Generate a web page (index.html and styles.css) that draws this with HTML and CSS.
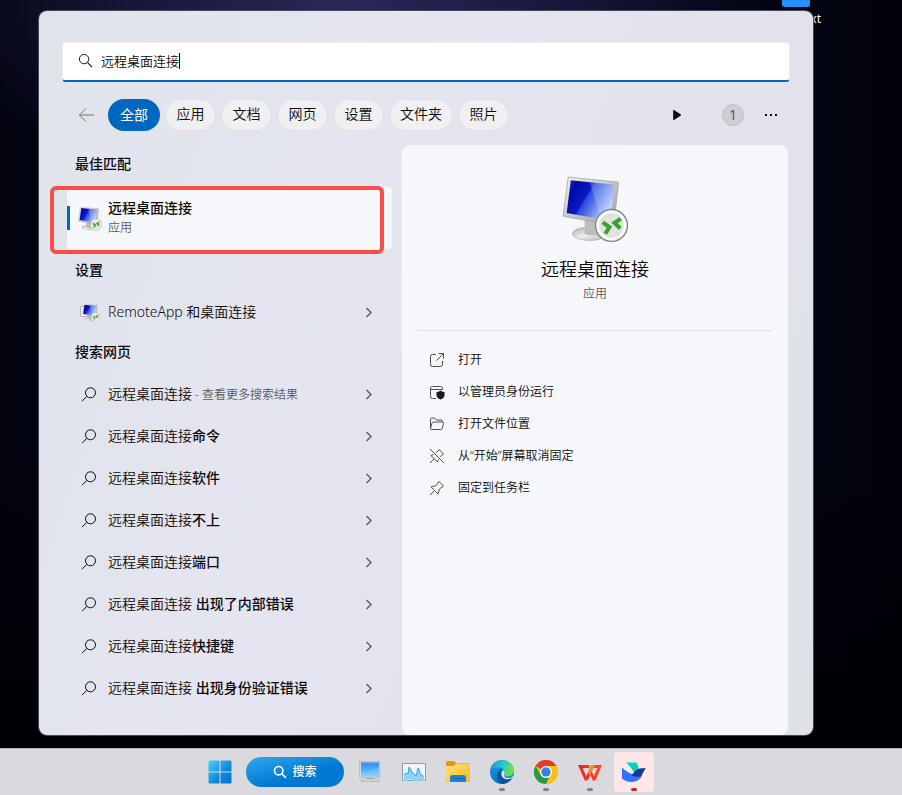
FILE: index.html
```html
<!DOCTYPE html>
<html lang="zh-CN">
<head>
<meta charset="utf-8">
<meta name="viewport" content="width=device-width, initial-scale=1">
<title>搜索</title>
<link rel="stylesheet" href="styles.css">
</head>
<body>
<svg class="defs" aria-hidden="true">
  <defs>
    <linearGradient id="screen" x1="0" y1="0" x2="1" y2="0.5">
      <stop offset="0" stop-color="#2338c8"/><stop offset=".2" stop-color="#0508a8"/><stop offset=".48" stop-color="#0a1cc4"/><stop offset=".5" stop-color="#2444dc"/><stop offset="1" stop-color="#c4d6ff"/>
    </linearGradient>
    <linearGradient id="frame" x1="0" y1="0" x2="1" y2="1">
      <stop offset="0" stop-color="#f2f2f0"/><stop offset=".5" stop-color="#c6c6c4"/><stop offset="1" stop-color="#9a9a98"/>
    </linearGradient>
    <linearGradient id="stand" x1="0" y1="0" x2="1" y2="1">
      <stop offset="0" stop-color="#a8a8a8"/><stop offset=".5" stop-color="#eeeeee"/><stop offset="1" stop-color="#b0b0b0"/>
    </linearGradient>
    <linearGradient id="tile" gradientUnits="userSpaceOnUse" x1="0" y1="0" x2="24" y2="24">
      <stop offset="0" stop-color="#4fd0fb"/><stop offset=".6" stop-color="#0f86dc"/><stop offset="1" stop-color="#0078d4"/>
    </linearGradient>
    <linearGradient id="pcblue" x1="0" y1="0" x2="0" y2="1">
      <stop offset="0" stop-color="#2f8cf0"/><stop offset="1" stop-color="#7cc8ff"/>
    </linearGradient>
    <linearGradient id="folder" x1="0" y1="0" x2="1" y2="1">
      <stop offset="0" stop-color="#ffe07a"/><stop offset="1" stop-color="#fbb922"/>
    </linearGradient>
    <linearGradient id="edgeTop" x1="0" y1="0" x2="1" y2="0.3">
      <stop offset="0" stop-color="#1693dc"/><stop offset=".5" stop-color="#2cbfd0"/><stop offset="1" stop-color="#68e052"/>
    </linearGradient>
    <linearGradient id="edgeSide" x1="0" y1="0" x2="0" y2="1">
      <stop offset="0" stop-color="#1fa0e6"/><stop offset="1" stop-color="#0870c8"/>
    </linearGradient>
    <linearGradient id="wps" gradientUnits="userSpaceOnUse" x1="0" y1="0" x2="24" y2="0">
      <stop offset="0" stop-color="#f41e1e"/><stop offset="1" stop-color="#ff4a24"/>
    </linearGradient>
    <symbol id="rdp" viewBox="0 0 64 66">
      <ellipse cx="27" cy="57" rx="17" ry="6.500" fill="url(#stand)" stroke="#aaaaaa" stroke-width=".7"/>
      <path d="M22 43h14l1 14q-8 3-15 0z" fill="#bdbdbd"/>
      <path d="M6 2 L55 7 L50 49 L1 40 Z" fill="url(#frame)" stroke="#a8a8a6" stroke-width=".8"/>
      <path d="M8.500 5 L51 9.500 L47 44.500 L4.500 37 Z" fill="url(#screen)"/>
      <path d="M27 7 L51 9.500 L47 44.500 L38 43 Z" fill="#b9cdfb" opacity=".3"/>
      <circle cx="48" cy="49" r="15.500" fill="#f5f5f3" stroke="#848482" stroke-width="1.300"/>
      <circle cx="48" cy="49" r="12.800" fill="#e2e2e0" stroke="#fff" stroke-width="1.500"/>
      <path d="M39.500 46l6.500 4.500-4 6.500M57 42.500l-6 4 5.500 5.500" fill="none" stroke="#35a52a" stroke-width="4"/>
    </symbol>
    <symbol id="find" viewBox="0 0 18 16">
      <circle cx="10.500" cy="6.800" r="5" fill="none" stroke="currentColor"/>
      <path d="M6.800 10.400 2 15.200" fill="none" stroke="currentColor"/>
    </symbol>
    <symbol id="chev" viewBox="0 0 10 12">
      <path d="M2.500 2 7 6.500 2.500 11" fill="none" stroke="currentColor" stroke-width="1.500"/>
    </symbol>
  </defs>
</svg>

<main class="desktop">
  <div class="shortcut">
    <span class="shortcut-icon"></span>
    <span class="shortcut-label">txt</span>
  </div>

  <section class="panel">
    <label class="searchbox">
      <svg class="search-icon" viewBox="0 0 16 16"><circle cx="6.500" cy="6.500" r="5" fill="none" stroke="currentColor"/><path d="M10.200 10.200 15 15" stroke="currentColor" stroke-width="1.200"/></svg>
      <input class="search-input" type="text" value="远程桌面连接" aria-label="搜索">
      <span class="caret"></span>
    </label>

    <nav class="filters">
      <button class="back" type="button" aria-label="返回"><svg viewBox="0 0 18 16"><path d="M17 8H1.500M8.500 1 1.500 8l7 7" fill="none" stroke="currentColor"/></svg></button>
      <button class="chip active" type="button">全部</button>
      <button class="chip" type="button">应用</button>
      <button class="chip" type="button">文档</button>
      <button class="chip" type="button">网页</button>
      <button class="chip" type="button">设置</button>
      <button class="chip" type="button">文件夹</button>
      <button class="chip" type="button">照片</button>
      <div class="tools">
        <button class="tool play" type="button" aria-label="更多筛选"><svg viewBox="0 0 10 12"><path d="M1.200 1.500v9q0 .8.800.4L8.600 6.700q.8-.7 0-1.400L2 1.100q-.8-.4-.8.400z" fill="currentColor"/></svg></button>
        <button class="tool points" type="button">1</button>
        <button class="tool more" type="button" aria-label="选项"><svg viewBox="0 0 14 4"><path d="M1 1h2v2H1zM6 1h2v2H6zM11 1h2v2h-2z" fill="currentColor"/></svg></button>
      </div>
    </nav>

    <div class="content">
      <div class="results">
        <h2>最佳匹配</h2>
        <div class="best-wrap">
          <button class="best" type="button">
            <svg class="app-icon"><use href="#rdp"/></svg>
            <span class="best-text"><strong>远程桌面连接</strong><small>应用</small></span>
          </button>
          <span class="marker"></span>
        </div>
        <h2>设置</h2>
        <button class="row" type="button"><svg class="remote-icon" viewBox="0 0 20 20"><path d="M.5 4.500h8v10h-8z" fill="#f4f4f4" stroke="#b4b4b8"/><use href="#rdp" x="2" y="1" width="18" height="19"/></svg><span>RemoteApp 和桌面连接</span><svg class="chev"><use href="#chev"/></svg></button>
        <h2>搜索网页</h2>
        <button class="row" type="button"><svg class="find"><use href="#find"/></svg><span>远程桌面连接<small> - 查看更多搜索结果</small></span><svg class="chev"><use href="#chev"/></svg></button>
        <button class="row" type="button"><svg class="find"><use href="#find"/></svg><span>远程桌面连接<b>命令</b></span><svg class="chev"><use href="#chev"/></svg></button>
        <button class="row" type="button"><svg class="find"><use href="#find"/></svg><span>远程桌面连接<b>软件</b></span><svg class="chev"><use href="#chev"/></svg></button>
        <button class="row" type="button"><svg class="find"><use href="#find"/></svg><span>远程桌面连接<b>不上</b></span><svg class="chev"><use href="#chev"/></svg></button>
        <button class="row" type="button"><svg class="find"><use href="#find"/></svg><span>远程桌面连接<b>端口</b></span><svg class="chev"><use href="#chev"/></svg></button>
        <button class="row" type="button"><svg class="find"><use href="#find"/></svg><span>远程桌面连接 <b>出现了内部错误</b></span><svg class="chev"><use href="#chev"/></svg></button>
        <button class="row" type="button"><svg class="find"><use href="#find"/></svg><span>远程桌面连接<b>快捷键</b></span><svg class="chev"><use href="#chev"/></svg></button>
        <button class="row" type="button"><svg class="find"><use href="#find"/></svg><span>远程桌面连接 <b>出现身份验证错误</b></span><svg class="chev"><use href="#chev"/></svg></button>
      </div>

      <aside class="preview">
        <header class="preview-head">
          <svg class="hero"><use href="#rdp"/></svg>
          <h1>远程桌面连接</h1>
          <p>应用</p>
        </header>
        <div class="actions">
          <button class="action" type="button"><svg viewBox="0 0 16 16"><path d="M7 2.500H3.500a2 2 0 0 0-2 2v8a2 2 0 0 0 2 2h8a2 2 0 0 0 2-2V9M9.500 1.500h5v5M14.500 1.500 7.500 8.500" fill="none" stroke="currentColor"/></svg>打开</button>
          <button class="action" type="button"><svg viewBox="0 0 16 16"><path d="M7 14.500H3.500a2 2 0 0 1-2-2v-8a2 2 0 0 1 2-2h8a2 2 0 0 1 2 2V6M1.500 5.500h12" fill="none" stroke="currentColor"/><path d="M11.500 6.500q2 1.500 4 1.500v3q0 3-4 4.500-4-1.500-4-4.500V8q2 0 4-1.500z" fill="#1a1a1c"/></svg>以管理员身份运行</button>
          <button class="action" type="button"><svg viewBox="0 0 16 16"><path d="M1.500 12.500v-9Q1.500 2 3 2h2.500l2 2H12q1.500 0 1.500 2M1.500 12.500 3 7.300Q3.400 6 4.500 6h9q1.300 0 1 1.300l-1.200 5q-.3 1.200-1.500 1.200H3q-1.500 0-1.500-1z" fill="none" stroke="currentColor"/></svg>打开文件位置</button>
          <button class="action" type="button"><svg viewBox="0 0 16 16"><path d="M1 1l14 14M7.200 4.800 10 1.500l4.500 4.500-3.300 2.800M4.600 6.400 2 7.500 8.500 14l1.100-2.600M5.200 10.800 1 15" fill="none" stroke="currentColor"/></svg>从“开始”屏幕取消固定</button>
          <button class="action" type="button"><svg viewBox="0 0 16 16"><path d="M10 1.500 14.500 6 10.500 9l-1.500 5L2 7l5-1.500zM5.200 10.800 1 15" fill="none" stroke="currentColor" stroke-linejoin="round"/></svg>固定到任务栏</button>
        </div>
      </aside>
    </div>
  </section>
</main>

<footer class="taskbar">
  <button class="task" type="button" aria-label="开始"><svg class="glyph" viewBox="0 0 24 24"><path d="M.500 1.500a1 1 0 0 1 1-1H11.500v11H.500zM12.500.500h10a1 1 0 0 1 1 1v10h-11zM.500 12.500h11v11h-10a1 1 0 0 1-1-1zM12.500 12.500h11v10a1 1 0 0 1-1 1h-10z" fill="url(#tile)"/></svg></button>
  <button class="task-search" type="button"><svg viewBox="0 0 16 16"><circle cx="6.500" cy="6.500" r="4.800" fill="none" stroke="currentColor" stroke-width="1.800"/><path d="M10 10l4.800 4.800" stroke="currentColor" stroke-width="2"/></svg>搜索</button>
  <button class="task" type="button" aria-label="此电脑"><svg class="glyph" viewBox="0 0 24 24"><path d="M1.500 1.500h20.500v16H1.500z" fill="#d2d6da" stroke="#b4b8bc" stroke-width=".8"/><path d="M3 2.500h18v14H3z" fill="url(#pcblue)"/><path d="M3 12q8 1 18-5v9.500H3z" fill="#a2dcff" opacity=".3"/><path d="M8 18h8v1H8z" fill="#a8acb0"/><path d="M3 20h18v1.500H3z" fill="#eee" stroke="#a6a6a6" stroke-width=".7"/></svg></button>
  <button class="task" type="button" aria-label="性能监视器"><svg class="glyph" viewBox="0 0 24 24"><path d="M.500 3.500h23v17H.500z" fill="#eef5fb" stroke="#8c9cac"/><path d="M2 15l2-2 2 1 1-7 2 3 1 3 2 1 2 2 2-8 1 1 1 5 2 1 2 3v3q-5-1-7 0t-5-1-5 1H2z" fill="#8ed2f6"/><path d="M2 15l2-2 2 1 1-7 2 3 1 3 2 1 2 2 2-8 1 1 1 5 2 1 2 2" fill="none" stroke="#3ba2e4"/></svg></button>
  <button class="task" type="button" aria-label="文件资源管理器"><svg class="glyph" viewBox="0 0 24 24"><path d="M0 2.500Q0 1 1.500 1H8l2 2h14v6H0z" fill="#dd9a10"/><path d="M0 6h8l2-2.500h14v18.500H0z" fill="url(#folder)"/><path d="M4 22v-4.500q0-2.500 2.500-2.500h11q2.500 0 2.500 2.500V22z" fill="#1684d6"/><path d="M7 18h10v1H7z" fill="#0a66b4"/></svg></button>
  <button class="task running" type="button" aria-label="Edge"><svg class="glyph" viewBox="0 0 24 24"><circle cx="12" cy="12" r="12" fill="url(#edgeSide)"/><path d="M.3 10C1.500 4 6.200 0 12 0c7 0 12 5 12 10.300 0 4-3 6.200-6.200 6.200-2.800 0-4.300-1.200-3.600-2.300 2-3-1-7-6-7C4.500 7.200 1.800 8.200.3 10z" fill="url(#edgeTop)"/><path d="M8 12.500c1-3 3.500-4 5-3.500-5 3-1.500 10 4 10 2.500 0 4-.8 5-1.500-2 4.200-6 6.500-10 6.500-4-2-6-7-4-11.500z" fill="#10509c"/><path d="M14.200 14.200c-1 2 1 3.800 4 3.800 2 0 3.700-.8 5-2.300l-.6 1.800q-2 1.800-5.600 1.800c-5 0-7.500-6-3.500-9.300 1.300 1.300 1.600 2.800.7 4.200z" fill="#dce8ef"/></svg></button>
  <button class="task running" type="button" aria-label="Chrome"><svg class="glyph" viewBox="0 0 24 24"><circle cx="12" cy="12" r="12" fill="#fbc116"/><path d="M12 12 1.600 6A12 12 0 0 1 22.400 6z" fill="#e33b2e"/><path d="M12 6h10.400A12 12 0 0 1 12 24l5.200-9z" fill="#fbc116"/><path d="M1.600 6 6.800 15q2 3 5.200 3l3-.7L12 24A12 12 0 0 1 1.600 6z" fill="#279847"/><circle cx="12" cy="12" r="6" fill="#fff"/><circle cx="12" cy="12" r="4.700" fill="#3b7ded"/></svg></button>
  <button class="task running" type="button" aria-label="WPS Office"><svg class="glyph" viewBox="0 0 24 24"><path d="M0 5h11.500v3H4.400l3.900 8L13.500 5H24l-6.500 15.500h-2.800L12.500 15 9.500 20.500H6.800zM15 8l-1.300 3.500L16 16l3.500-8z" fill="url(#wps)" fill-rule="evenodd"/><path d="M13.500 5H17l-5.500 10.500-1.600-3z" fill="#ff8a24"/></svg></button>
  <button class="task running current" type="button" aria-label="飞书"><svg class="glyph" viewBox="0 0 24 24"><path d="M4 2.500h10.500q1.500 2 2 6L12.500 13Q9 6.500 4 2.500z" fill="#05d3b8"/><path d="M0 7.500q6 6 13 7.500h7.500Q17 22 10 22 4 22 0 18.500z" fill="#3270ff"/><path d="M9.500 15.500q5-7.500 10-7.200h4.500q-2 2-3 4.700-2 4-5 4-3-.5-6.500-1.500z" fill="#153a9b"/></svg></button>
</footer>
</body>
</html>
```

FILE: styles.css
```css
* {
  box-sizing: border-box;
}

body {
  margin: 0;
  min-height: 100vh;
  display: flex;
  flex-direction: column;
  background: #02030f;
  color: #0a0a0c;
  font: 14px/20px "Noto Sans", "Noto Sans CJK SC", sans-serif;
  font-weight: 350;
}

button,
input {
  font: inherit;
  color: inherit;
  border: 0;
  background: none;
  padding: 0;
  margin: 0;
}

svg {
  display: block;
  flex: none;
}

.defs {
  position: absolute;
  width: 0;
  height: 0;
}

.desktop {
  position: relative;
  flex: 1;
  display: flex;
  padding: 11px 89px 13px 39px;
  background:
    linear-gradient(180deg, transparent 60%, #000005),
    radial-gradient(ellipse 420px 200px at 38% 0, #2a2858, transparent),
    linear-gradient(90deg, #02030f, #050a22 50%, #01020c);
}

.shortcut {
  position: absolute;
  top: 0;
  right: 81px;
  width: 39px;
  display: flex;
  flex-direction: column;
}

.shortcut-icon {
  width: 28px;
  height: 7px;
  border-radius: 0 0 3px 3px;
  background: #2491ff;
}

.shortcut-label {
  margin-top: 4px;
  text-align: right;
  font-size: 12px;
  font-weight: 400;
  line-height: 16px;
  color: #fff;
}

.panel {
  position: relative;
  flex: 1;
  min-width: 0;
  display: flex;
  flex-direction: column;
  padding: 31px 23px 0;
  border-radius: 8px;
  background: linear-gradient(110deg, #e0e4ea, #e4e5f0 40%, #e2e2ec 75%, #dee2e8);
  box-shadow: 0 0 0 1px #46465a;
}

.searchbox {
  display: flex;
  align-items: center;
  height: 40px;
  padding: 0 16px 2px 15px;
  border-radius: 4px;
  border: 1px solid #ececf0;
  border-bottom: 2px solid #0067c0;
  background: #fff;
}

.search-icon {
  width: 15px;
  height: 15px;
  margin-right: 8px;
}

.search-input {
  field-sizing: content;
  font-size: 13px;
  line-height: 20px;
  outline: 0;
}

.caret {
  width: 1px;
  height: 16px;
  background: #000;
}

.filters {
  display: flex;
  align-items: center;
  gap: 5px;
  height: 32px;
  margin-top: 17px;
  padding-left: 16px;
}

.back {
  width: 25px;
  color: #6a6b72;
}

.back svg {
  width: 17px;
  height: 16px;
}

.chip {
  height: 32px;
  padding: 0 10px 2px;
  border: 1px solid #e2e2e5;
  border-radius: 16px;
  background: #f0f0f2;
  white-space: nowrap;
}

.chip + .chip {
  min-width: 51px;
}

.chip.active {
  padding: 0 12px;
  border: 0;
  background: #0067c0;
  color: #fff;
  font-weight: 400;
}

.tools {
  display: flex;
  align-items: center;
  margin-left: auto;
  padding-right: 12px;
}

.play svg {
  width: 10px;
  height: 14px;
}

.points {
  width: 22px;
  height: 22px;
  margin: 0 20px 0 40px;
  border: 1px solid #bfbfc8;
  border-radius: 50%;
  background: #ceced7;
  font-weight: 400;
  line-height: 20px;
  color: #55555a;
}

.more svg {
  width: 14px;
  height: 4px;
}

.content {
  flex: 1;
  display: flex;
  margin-top: 14px;
}

.results {
  flex: none;
  width: 340px;
  padding: 0 10px 24px 5px;
}

h2 {
  height: 40px;
  margin: 0;
  padding-left: 8px;
  font-size: 14px;
  line-height: 38px;
  font-weight: 500;
}

.best-wrap {
  position: relative;
  padding: 2px 0;
}

.best {
  display: flex;
  align-items: center;
  width: 100%;
  height: 62px;
  padding: 0 11px;
  border-radius: 4px;
  background: linear-gradient(#0067c0, #0067c0) 0 50% / 3px 24px no-repeat, #f6f7fb;
  text-align: left;
}

.app-icon {
  width: 24px;
  height: 25px;
  margin-right: 6px;
}

.best-text {
  display: flex;
  flex-direction: column;
}

.best-text strong {
  font-weight: 500;
}

.best-text small {
  font-size: 12px;
  color: #58585c;
}

.marker {
  position: absolute;
  inset: 1px 8px -3px -17px;
  border: 4px solid #f94d47;
  border-radius: 6px;
  pointer-events: none;
}

.row {
  display: flex;
  align-items: center;
  width: 100%;
  height: 42px;
  padding: 0 18px 0 13px;
  text-align: left;
  white-space: nowrap;
}

.row span {
  flex: 1;
}

.row b {
  font-weight: 500;
}

.row small {
  font-size: 12px;
  color: #58585c;
}

.find {
  width: 18px;
  height: 16px;
  margin-right: 10px;
}

.remote-icon {
  width: 20px;
  height: 20px;
  margin-right: 8px;
}

.chev {
  width: 10px;
  height: 12px;
  color: #606066;
}

.preview {
  flex: 1;
  min-width: 0;
  margin-right: 2px;
  padding: 30px 16px;
  border-radius: 8px;
  background: #f6f7fb;
}

.preview-head {
  display: flex;
  flex-direction: column;
  align-items: center;
  padding-bottom: 26px;
  border-bottom: 1px solid #dedfe4;
}

.hero {
  width: 66px;
  height: 68px;
}

h1 {
  margin: 13px 0 0;
  font-size: 18px;
  line-height: 26px;
  font-weight: 350;
}

.preview-head p {
  margin: 2px 0 0;
  font-size: 12px;
  color: #58585c;
}

.actions {
  padding: 13px 11px;
}

.action {
  display: flex;
  align-items: center;
  gap: 13px;
  width: 100%;
  height: 32px;
  font-size: 12px;
}

.action svg {
  width: 16px;
  height: 16px;
  color: #505054;
}

.taskbar {
  display: flex;
  align-items: center;
  gap: 4px;
  height: 47px;
  padding: 0 16px 0 200px;
  border-top: 1px solid #b8b8bc;
  background: #dadade;
}

.task {
  position: relative;
  flex: none;
  display: grid;
  place-items: center;
  width: 40px;
  height: 40px;
  border-radius: 4px;
}

.glyph {
  width: 24px;
  height: 24px;
}

.task-search {
  display: flex;
  align-items: center;
  justify-content: center;
  gap: 5px;
  width: 98px;
  height: 30px;
  margin: 0 2px;
  border-radius: 15px;
  background: linear-gradient(165deg, #2ea9ee, #0078d4 60%);
  color: #fff;
  font-size: 12px;
  font-weight: 500;
}

.task-search svg {
  width: 14px;
  height: 14px;
}

.running::after {
  content: "";
  position: absolute;
  bottom: 1px;
  left: 17px;
  width: 6px;
  height: 3px;
  border-radius: 2px;
  background: #808084;
}

.current {
  background: #fde7e9;
}

.current::after {
  background: #c42b1c;
}
```
